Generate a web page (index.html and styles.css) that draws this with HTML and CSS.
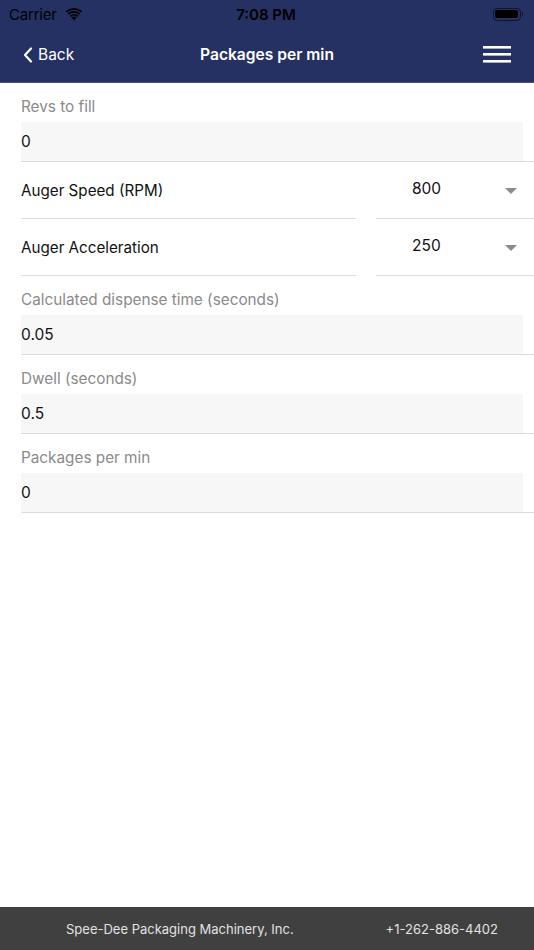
FILE: index.html
```html
<!DOCTYPE html>
<html>
<head>
<meta charset="utf-8">
<link rel="stylesheet" href="styles.css">
</head>
<body>
<div class="app">
  <header class="header">
    <div class="status">
      <div class="status-left">
        <span class="carrier">Carrier</span>
        <svg class="wifi" width="18" height="13" viewBox="0 0 18 13"><path d="M9 12.5 L6.4 9.6 A3.8 3.8 0 0 1 11.6 9.6 Z" fill="#000"/><path d="M4.6 7.6 A6.6 6.6 0 0 1 13.4 7.6 L12.2 8.9 A4.9 4.9 0 0 0 5.8 8.9 Z" fill="#000"/><path d="M2.6 5.4 A9.6 9.6 0 0 1 15.4 5.4 L14.2 6.7 A7.8 7.8 0 0 0 3.8 6.7 Z" fill="#000"/><path d="M0.6 3.2 A12.6 12.6 0 0 1 17.4 3.2 L16.2 4.5 A10.8 10.8 0 0 0 1.8 4.5 Z" fill="#000"/></svg>
      </div>
      <span class="time">7:08 PM</span>
      <div class="status-right">
        <span class="battery"><span class="battery-fill"></span></span><span class="battery-tip"></span>
      </div>
    </div>
    <nav class="navbar">
      <div class="back">
        <svg width="10" height="16" viewBox="0 0 10 16"><path d="M8 1.5 L2 8 L8 14.5" fill="none" stroke="#fff" stroke-width="2.2" stroke-linecap="round" stroke-linejoin="round"/></svg>
        <span>Back</span>
      </div>
      <div class="title">Packages per min</div>
      <svg class="menu" width="28" height="17" viewBox="0 0 28 17"><rect x="0" y="0" width="28" height="2.6" fill="#fff"/><rect x="0" y="7" width="28" height="2.6" fill="#fff"/><rect x="0" y="14" width="28" height="2.6" fill="#fff"/></svg>
    </nav>
  </header>

  <main class="form">
    <div class="field">
      <div class="label">Revs to fill</div>
      <div class="input">0</div>
    </div>

    <div class="select-row">
      <div class="select-label">Auger Speed (RPM)</div>
      <div class="select-value"><span>800</span><span class="caret"></span></div>
    </div>
    <div class="select-row">
      <div class="select-label">Auger Acceleration</div>
      <div class="select-value"><span>250</span><span class="caret"></span></div>
    </div>

    <div class="field">
      <div class="label">Calculated dispense time (seconds)</div>
      <div class="input">0.05</div>
    </div>
    <div class="field">
      <div class="label">Dwell (seconds)</div>
      <div class="input">0.5</div>
    </div>
    <div class="field">
      <div class="label">Packages per min</div>
      <div class="input">0</div>
    </div>
  </main>

  <footer class="footer">
    <span>Spee-Dee Packaging Machinery, Inc.</span>
    <span>+1-262-886-4402</span>
  </footer>
</div>
</body>
</html>
```

FILE: styles.css
```css
* { box-sizing: border-box; }
html, body { margin: 0; padding: 0; }
body {
  font-family: Inter, "Liberation Sans", Arial, sans-serif;
  background: #fff;
  color: #111;
}
.app {
  width: 534px;
  height: 950px;
  display: flex;
  flex-direction: column;
}
.header {
  background: #263163;
  border-bottom: 1px solid #4b5178;
}
.status {
  height: 28px;
  display: grid;
  grid-template-columns: 1fr auto 1fr;
  align-items: center;
  padding: 0 11px 0 9px;
  color: #000;
  font-size: 15px;
}
.status-left { display: flex; align-items: center; gap: 8px; }
.carrier { letter-spacing: -0.2px; }
.time { font-weight: 600; font-size: 15px; }
.status-right { display: flex; justify-content: flex-end; align-items: center; }
.battery {
  width: 28px; height: 13px;
  border: 1.5px solid #0d1330;
  border-radius: 4px;
  padding: 1.5px;
  display: flex;
}
.battery-fill { flex: 1; background: #000; border-radius: 2px; }
.battery-tip { width: 1.5px; height: 4px; background: #0d1330; margin-left: 1px; border-radius: 0 1px 1px 0; }
.navbar {
  height: 54px;
  display: grid;
  grid-template-columns: 1fr auto 1fr;
  align-items: center;
  padding: 0 23px 2px 23px;
  color: #fff;
}
.back { display: flex; align-items: center; gap: 5px; font-size: 15.5px; }
.back svg { margin-top: 1px; }
.title { font-weight: 600; font-size: 15.6px; }
.menu { justify-self: end; }

.form { flex: 1; }
.field {
  padding-left: 21px;
}
.label {
  padding-top: 15px;
  height: 39px;
  line-height: 18px;
  font-size: 15.3px;
  color: #8a8a8a;
}
.input {
  height: 40px;
  font-size: 15.5px;
  line-height: 40px;
  color: #111;
  border-bottom: 1px solid #dcdcdc;
  background: linear-gradient(to right, #f7f7f7 calc(100% - 11px), #fff calc(100% - 11px));
}

.select-row {
  display: grid;
  grid-template-columns: 335px 158px;
  column-gap: 20px;
  padding-left: 21px;
  height: 57px;
}
.select-label, .select-value {
  border-bottom: 1px solid #dcdcdc;
  display: flex;
  align-items: center;
  font-size: 15.5px;
  color: #111;
}
.select-label { padding-top: 1px; font-size: 15.2px; }
.select-value {
  justify-content: space-between;
  padding-left: 36px;
  padding-right: 17px;
  padding-bottom: 4px;
}
.caret {
  width: 0; height: 0;
  border-left: 6.5px solid transparent;
  border-right: 6.5px solid transparent;
  border-top: 6px solid #8c8c8c;
  margin-top: 5px;
}

.footer {
  height: 43px;
  background: #404040;
  color: #e2e2e2;
  font-size: 13px;
  display: flex;
  align-items: center;
  padding-left: 66px;
  padding-right: 36px;
  justify-content: space-between;
}
```
